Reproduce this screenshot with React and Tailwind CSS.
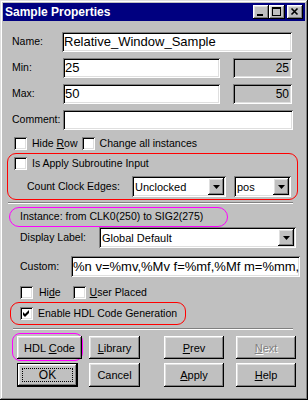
import React from 'react';

const raised =
  'bg-[#c0c0c0] shadow-[inset_-1px_-1px_0_#000,inset_1px_1px_0_#fff,inset_-2px_-2px_0_#808080,inset_2px_2px_0_#dfdfdf]';
const sunken =
  'shadow-[inset_1px_1px_0_#808080,inset_-1px_-1px_0_#fff,inset_2px_2px_0_#000,inset_-2px_-2px_0_#dfdfdf]';

const U = ({ children }) => <span className="underline underline-offset-[1px]">{children}</span>;

function CheckBox({ checked }) {
  return (
    <div className={`w-[13px] h-[13px] shrink-0 bg-white ${sunken}`}>
      {checked && (
        <svg width="13" height="13" viewBox="0 0 13 13">
          <polygon points="3,5 5,7 9,3 9,6 5,10 3,8" fill="#000" />
        </svg>
      )}
    </div>
  );
}

function Arrow() {
  return (
    <svg width="7" height="4" viewBox="0 0 7 4">
      <polygon points="0,0 7,0 3.5,4" fill="#000" />
    </svg>
  );
}

function Select({ value, className }) {
  return (
    <div className={`h-[21px] bg-white flex items-center pl-[3px] pr-[2px] ${sunken} ${className}`}>
      <span className="flex-1 text-[11px] leading-[14px] truncate">{value}</span>
      <div className={`w-[16px] h-[17px] flex items-center justify-center ${raised}`}>
        <Arrow />
      </div>
    </div>
  );
}

function Field({ value, className }) {
  return (
    <div className={`h-[20px] bg-white flex items-center pl-[2px] overflow-hidden ${sunken} ${className}`}>
      <span className="text-[13px] leading-[16px] whitespace-nowrap">{value}</span>
    </div>
  );
}

function Btn({ children, className = '', disabled }) {
  return (
    <div
      className={`h-[23px] flex items-center justify-center text-[11px] ${raised} ${
        disabled ? 'text-[#808080] [text-shadow:1px_1px_0_#fff]' : 'text-black'
      } ${className}`}
    >
      <span className="leading-[14px]">{children}</span>
    </div>
  );
}

function TitleButton({ children, className = '' }) {
  return <div className={`w-[16px] h-[14px] ${raised} ${className}`}>{children}</div>;
}

export default function App() {
  return (
    <div className="w-[308px] h-[400px] bg-[#c0c0c0] p-[3px] flex flex-col font-['Liberation_Sans',Arial,sans-serif] text-black shadow-[inset_-1px_-1px_0_#000,inset_1px_1px_0_#dfdfdf,inset_-2px_-2px_0_#808080,inset_2px_2px_0_#fff]">
      {/* title bar */}
      <div className="h-[18px] bg-[#000080] flex items-center pl-[2px] pr-[2px]">
        <span className="flex-1 text-white font-bold text-[12px] leading-none">Sample Properties</span>
        <TitleButton>
          <svg width="16" height="14" viewBox="0 0 16 14">
            <rect x="4" y="9" width="6" height="2" fill="#000" />
          </svg>
        </TitleButton>
        <TitleButton>
          <svg width="16" height="14" viewBox="0 0 16 14">
            <rect x="3.5" y="2.5" width="8" height="8" fill="none" stroke="#000" />
            <rect x="3" y="2" width="9" height="2" fill="#000" />
          </svg>
        </TitleButton>
        <TitleButton className="ml-[2px]">
          <svg width="16" height="14" viewBox="0 0 16 14">
            <path d="M4.5 3.5 L10.5 9.5 M10.5 3.5 L4.5 9.5" stroke="#000" strokeWidth="1.6" />
          </svg>
        </TitleButton>
      </div>

      {/* name */}
      <div className="mt-[11px] flex items-center h-[20px] pl-[9px] text-[10.5px]">
        <span className="w-[50px]">Name:</span>
        <Field value="Relative_Window_Sample" className="w-[230px]" />
      </div>

      {/* min */}
      <div className="mt-[6px] flex items-center h-[20px] pl-[9px] text-[10.5px]">
        <span className="w-[51px]">Min:</span>
        <Field value="25" className="w-[157px]" />
        <div className={`ml-[13px] w-[59px] h-[20px] flex items-center justify-end pr-[3px] text-[12px] ${sunken}`}>25</div>
      </div>

      {/* max */}
      <div className="mt-[6px] flex items-center h-[20px] pl-[9px] text-[10.5px]">
        <span className="w-[51px]">Max:</span>
        <Field value="50" className="w-[157px]" />
        <div className={`ml-[13px] w-[59px] h-[20px] flex items-center justify-end pr-[3px] text-[12px] ${sunken}`}>50</div>
      </div>

      {/* comment */}
      <div className="mt-[6px] flex items-center h-[20px] pl-[9px] text-[10.5px]">
        <span className="w-[51px]">Comment:</span>
        <Field value="" className="w-[230px]" />
      </div>

      {/* hide row */}
      <div className="mt-[7px] flex items-center h-[13px] pl-[11px] text-[10.5px]">
        <CheckBox />
        <span className="ml-[5px]">
          Hide <U>R</U>ow
        </span>
        <div className="ml-[4px]">
          <CheckBox />
        </div>
        <span className="ml-[5px]">Change all instances</span>
      </div>

      {/* subroutine group */}
      <div className="mt-[3px] ml-[4px] w-[291px] h-[47px] border border-[#ff0000] rounded-[9px] flex flex-col text-[10.5px]">
        <div className="mt-[3px] pl-[6px] flex items-center h-[13px]">
          <CheckBox />
          <span className="ml-[5px]">Is Apply Subroutine Input</span>
        </div>
        <div className="mt-[6px] pl-[19px] flex items-center h-[21px]">
          <span className="w-[105px]">Count Clock Edges:</span>
          <Select value="Unclocked" className="w-[94px]" />
          <Select value="pos" className="ml-[8px] w-[57px]" />
        </div>
      </div>

      <div className="mt-[2px] ml-[5px] w-[285px] h-[2px] border-t border-t-[#808080] border-b border-b-white" />

      {/* instance */}
      <div className="mt-[3px] ml-[6px] w-[219px] h-[20px] border border-[#ff00ff] rounded-[10px] flex items-center pl-[10px] text-[10.5px]">
        Instance: from CLK0(250) to SIG2(275)
      </div>

      <div className="flex items-center h-[21px] pl-[17px] text-[10.5px]">
        <span className="w-[79px]">Display Label:</span>
        <Select value="Global Default" className="w-[197px]" />
      </div>

      <div className="mt-[8px] flex items-center h-[21px] pl-[17px] text-[10.5px]">
        <span className="w-[51px]">Custom:</span>
        <Field value="%n v=%mv,%Mv f=%mf,%Mf m=%mm," className="w-[229px] h-[21px]" />
      </div>

      <div className="mt-[9px] flex items-center h-[13px] pl-[17px] text-[10.5px]">
        <CheckBox />
        <span className="ml-[6px]">
          Hi<U>d</U>e
        </span>
        <div className="ml-[12px]">
          <CheckBox />
        </div>
        <span className="ml-[4px]">
          <U>U</U>ser Placed
        </span>
      </div>

      {/* hdl group */}
      <div className="mt-[3px] ml-[7px] w-[176px] h-[23px] border border-[#ff0000] rounded-[9px] flex items-center pl-[9px] text-[10.5px]">
        <CheckBox checked />
        <span className="ml-[5px]">Enable HDL Code Generation</span>
      </div>

      <div className="mt-[3px] ml-[10px] w-[280px] h-[2px] border-t border-t-[#808080] border-b border-b-white" />

      {/* buttons */}
      <div className="mt-[3px] flex items-start">
        <div className="ml-[9px] border border-[#ff00ff] rounded-[8px] pl-[4px] pt-[2px] pb-[1px]">
          <Btn className="w-[65px]">
            HDL <U>C</U>ode
          </Btn>
        </div>
        <Btn className="mt-[3px] ml-[6px] w-[51px]">
          <U>L</U>ibrary
        </Btn>
        <Btn className="mt-[3px] ml-[24px] w-[60px]">
          <U>P</U>rev
        </Btn>
        <Btn className="mt-[3px] ml-[12px] w-[60px]" disabled>
          <U>N</U>ext
        </Btn>
      </div>
      <div className="mt-[2px] flex items-start">
        <div className="ml-[14px] w-[61px] h-[24px] border border-black">
          <div className={`w-full h-full p-[4px] ${raised}`}>
            <div className="w-full h-full border border-dotted border-black flex items-center justify-center text-[12px] leading-none">
              OK
            </div>
          </div>
        </div>
        <Btn className="ml-[11px] w-[51px] h-[24px]">Cancel</Btn>
        <Btn className="ml-[24px] w-[60px] h-[24px]">
          <U>A</U>pply
        </Btn>
        <Btn className="ml-[12px] w-[60px] h-[24px]">
          <U>H</U>elp
        </Btn>
      </div>
    </div>
  );
}
